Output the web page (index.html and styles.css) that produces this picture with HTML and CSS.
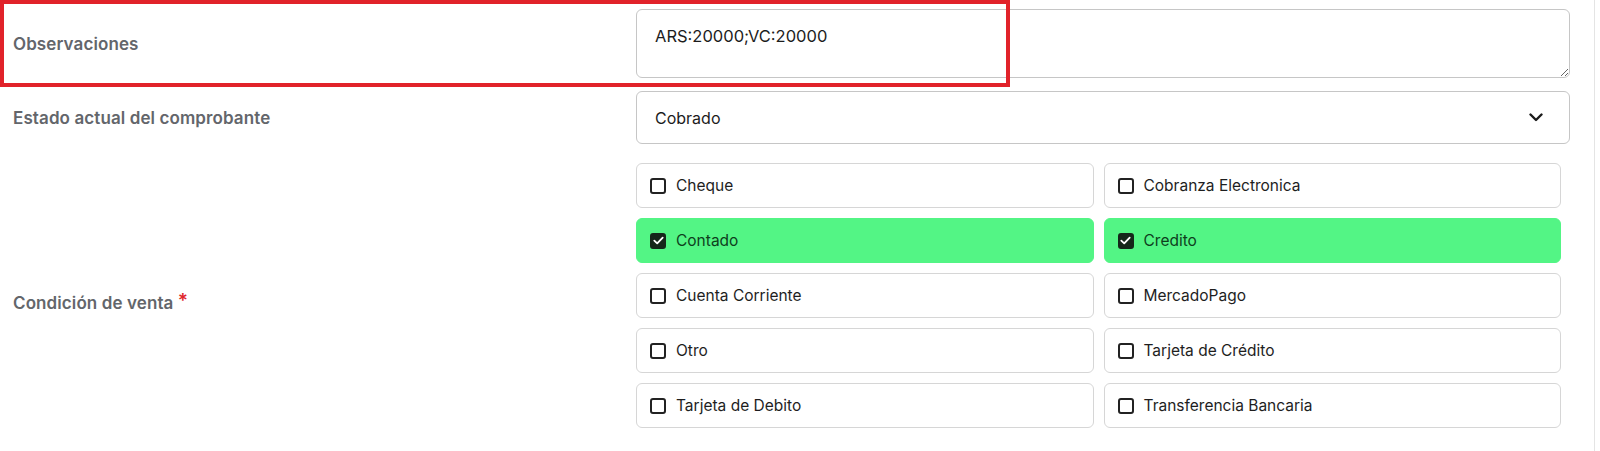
FILE: index.html
```html
<!DOCTYPE html>
<html lang="es">
<head>
<meta charset="utf-8">
<title>Comprobante</title>
<link rel="stylesheet" href="styles.css">
</head>
<body>
<div class="page">
  <div class="form">
    <div class="row row-obs">
      <div class="label">Observaciones</div>
      <div class="field">
        <textarea class="textarea">ARS:20000;VC:20000</textarea>
      </div>
    </div>
    <div class="row row-estado">
      <div class="label">Estado actual del comprobante</div>
      <div class="field">
        <div class="select">
          <span>Cobrado</span>
          <svg class="chev" width="14" height="9" viewBox="0 0 14 9"><path d="M1.5 1.5 L7 7 L12.5 1.5" fill="none" stroke="#1b1b1b" stroke-width="2.4" stroke-linecap="round" stroke-linejoin="round"/></svg>
        </div>
      </div>
    </div>
    <div class="row row-cond">
      <div class="label">Condición de venta <span class="req">*</span></div>
      <div class="field">
        <div class="options">
          <div class="opt"><span class="cb"></span><span>Cheque</span></div>
          <div class="opt"><span class="cb"></span><span>Cobranza Electronica</span></div>
          <div class="opt on"><span class="cb"><svg width="11" height="9" viewBox="0 0 11 9"><path d="M1.3 4.6 L4.2 7.4 L9.7 1.6" fill="none" stroke="#fff" stroke-width="1.8" stroke-linecap="round" stroke-linejoin="round"/></svg></span><span>Contado</span></div>
          <div class="opt on"><span class="cb"><svg width="11" height="9" viewBox="0 0 11 9"><path d="M1.3 4.6 L4.2 7.4 L9.7 1.6" fill="none" stroke="#fff" stroke-width="1.8" stroke-linecap="round" stroke-linejoin="round"/></svg></span><span>Credito</span></div>
          <div class="opt"><span class="cb"></span><span>Cuenta Corriente</span></div>
          <div class="opt"><span class="cb"></span><span>MercadoPago</span></div>
          <div class="opt"><span class="cb"></span><span>Otro</span></div>
          <div class="opt"><span class="cb"></span><span>Tarjeta de Crédito</span></div>
          <div class="opt"><span class="cb"></span><span>Tarjeta de Debito</span></div>
          <div class="opt"><span class="cb"></span><span>Transferencia Bancaria</span></div>
        </div>
      </div>
    </div>
  </div>
  <div class="highlight"></div>
</div>
</body>
</html>
```
FILE: styles.css
```css
* { box-sizing: border-box; }
html, body { margin: 0; padding: 0; background: #fff; }
body { font-family: Inter, "Noto Sans", "Liberation Sans", sans-serif; }

.page {
  position: relative;
  width: 1595px;
  height: 451px;
  border-right: 1px solid #e4e4e4;
}

.form { padding-top: 9px; }

.row {
  display: flex;
  align-items: center;
}
.row-estado { margin-top: 13px; }
.row-cond { margin-top: 19px; }

.label {
  width: 636px;
  padding-left: 13px;
  font-size: 17px;
  font-weight: 600;
  letter-spacing: 0.1px;
  color: #63666b;
}
.req {
  color: #e0262c;
  font-size: 19px;
  vertical-align: 2px;
}

.field {
  flex: 1;
  margin-right: 24px;
}

.textarea {
  display: block;
  width: 100%;
  height: 69px;
  margin: 0;
  padding: 14px 18px;
  border: 1px solid #c6c6c6;
  border-radius: 6px;
  font-family: inherit;
  font-size: 16.5px;
  line-height: 24px;
  color: #1c1c1c;
  background: #fff;
  outline: none;
}

.select {
  height: 53px;
  padding: 0 26px 0 18px;
  border: 1px solid #c6c6c6;
  border-radius: 6px;
  display: flex;
  align-items: center;
  justify-content: space-between;
  font-size: 16px;
  color: #1c1c1c;
}
.chev { display: block; }

.options {
  display: grid;
  grid-template-columns: 1fr 1fr;
  column-gap: 10px;
  margin-right: 9px;
}
.opt {
  height: 45px;
  margin-bottom: 10px;
  border: 1px solid #d6d6d6;
  border-radius: 6px;
  display: flex;
  align-items: center;
  padding-left: 13px;
  font-size: 15.5px;
  color: #1e1e1e;
}
.cb {
  width: 16px;
  height: 16px;
  border: 2px solid #222;
  border-radius: 3px;
  margin-right: 10px;
  display: flex;
  align-items: center;
  justify-content: center;
  flex: none;
}
.opt.on {
  background: #53f585;
  border-color: #53f585;
  color: #0e3f1d;
}
.opt.on .cb {
  background: #15271a;
  border-color: #15271a;
}

.highlight {
  position: absolute;
  left: 0;
  top: 0;
  width: 1010px;
  height: 87px;
  border: 4px solid #e1222a;
  pointer-events: none;
}
```
